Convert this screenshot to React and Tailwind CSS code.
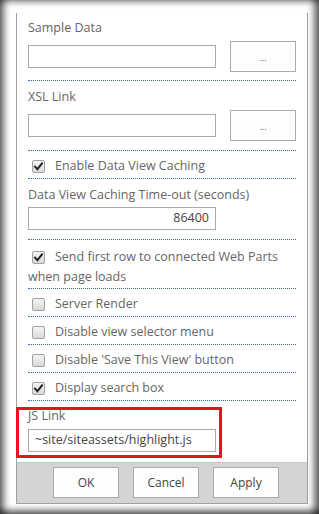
import React from "react";

const font = { fontFamily: '"Open Sans", "Noto Sans", sans-serif' };

function Box({ checked }) {
  return (
    <span className="relative inline-block w-[13px] h-[13px] shrink-0 rounded-[2px] border border-[#a2a2a2] bg-gradient-to-b from-[#f4f4f4] to-[#d9d9d9]">
      {checked && (
        <svg viewBox="0 0 13 13" className="absolute left-[-1px] top-[-1px] w-[13px] h-[13px]">
          <path d="M3 6.6 L5.4 9.2 L10 3.4" fill="none" stroke="#222" strokeWidth="2" strokeLinecap="square" />
        </svg>
      )}
    </span>
  );
}

function CheckRow({ label, checked }) {
  return (
    <div className="h-[28px] pt-[3px] flex items-center gap-[10px] pl-[4px] border-b border-dotted border-[#2f63c9]">
      <Box checked={checked} />
      <span className="text-[12.5px] leading-[18px] text-[#666]">{label}</span>
    </div>
  );
}

function Dots() {
  return (
    <div className="w-[66px] h-[31px] border border-[#ababab] bg-[#fdfdfd] flex items-end justify-center pb-[9px] text-[9px] leading-[9px] text-[#555]">
      ...
    </div>
  );
}

export default function App() {
  return (
    <div
      style={font}
      className="w-[319px] h-[514px] bg-white pl-[16px] pr-[11px] pt-[13px] pb-[10px] shadow-[inset_9px_0_7px_-5px_rgba(0,0,0,0.6),inset_-9px_0_7px_-4px_rgba(0,0,0,0.6),inset_0_6px_6px_-4px_rgba(0,0,0,0.45),inset_0_-8px_6px_-4px_rgba(0,0,0,0.6)]"
    >
      <div className="h-full border-l border-r border-b border-[#a0a0a0] flex flex-col">
        <div className="px-[11px]">
          {/* Sample Data */}
          <div className="pt-[6px] pb-[8px] border-b border-dotted border-[#2f63c9]">
            <div className="text-[12.5px] leading-[18px] text-[#666]">Sample Data</div>
            <div className="mt-[4px] flex items-center justify-between">
              <div className="w-[188px] h-[23px] border border-[#ababab] bg-white" />
              <Dots />
            </div>
          </div>
          {/* XSL Link */}
          <div className="pt-[7px] pb-[9px] border-b border-dotted border-[#2f63c9]">
            <div className="text-[12.5px] leading-[18px] text-[#666]">XSL Link</div>
            <div className="mt-[4px] flex items-center justify-between">
              <div className="w-[188px] h-[23px] border border-[#ababab] bg-white" />
              <Dots />
            </div>
          </div>
          <CheckRow label="Enable Data View Caching" checked />
          {/* Time-out */}
          <div className="pt-[7px] pb-[9px] border-b border-dotted border-[#2f63c9]">
            <div className="text-[12.5px] leading-[18px] text-[#666]">Data View Caching Time-out (seconds)</div>
            <div className="mt-[3px] w-[188px] h-[23px] border border-[#ababab] bg-white flex items-center justify-end pr-[6px] text-[12.5px] text-[#444]">
              86400
            </div>
          </div>
          {/* Send first row */}
          <div className="pt-[7px] pb-[1px] border-b border-dotted border-[#2f63c9]">
            <div className="flex items-center gap-[10px] pl-[4px] h-[20px]">
              <Box checked />
              <span className="text-[12.5px] leading-[20px] text-[#666]">Send first row to connected Web Parts</span>
            </div>
            <div className="text-[12.5px] leading-[20px] text-[#666]">when page loads</div>
          </div>
          <CheckRow label="Server Render" />
          <CheckRow label="Disable view selector menu" />
          <CheckRow label="Disable 'Save This View' button" />
          <CheckRow label="Display search box" checked />
          {/* JS Link */}
          <div className="relative pt-[6px] pb-[10px]">
            <div className="text-[12.5px] leading-[18px] text-[#666]">JS Link</div>
            <div className="mt-[4px] w-[188px] h-[23px] border border-[#ababab] bg-white flex items-center pl-[6px] text-[12.5px] text-[#444]">
              ~site/siteassets/highlight.js
            </div>
            <div className="absolute left-[-12px] top-[6px] w-[206px] h-[51px] border-[3px] border-[#e81123]" />
          </div>
        </div>
        <div className="flex-1 bg-[#d4d4d4] border-t border-[#c8c8c8] flex items-start justify-end pt-[4px] pr-[28px] gap-[14px]">
          {["OK", "Cancel", "Apply"].map((t) => (
            <div
              key={t}
              className="w-[66px] h-[31px] border border-[#ababab] bg-[#fdfdfd] flex items-center justify-center text-[12px] text-[#444]"
            >
              {t}
            </div>
          ))}
        </div>
      </div>
    </div>
  );
}
